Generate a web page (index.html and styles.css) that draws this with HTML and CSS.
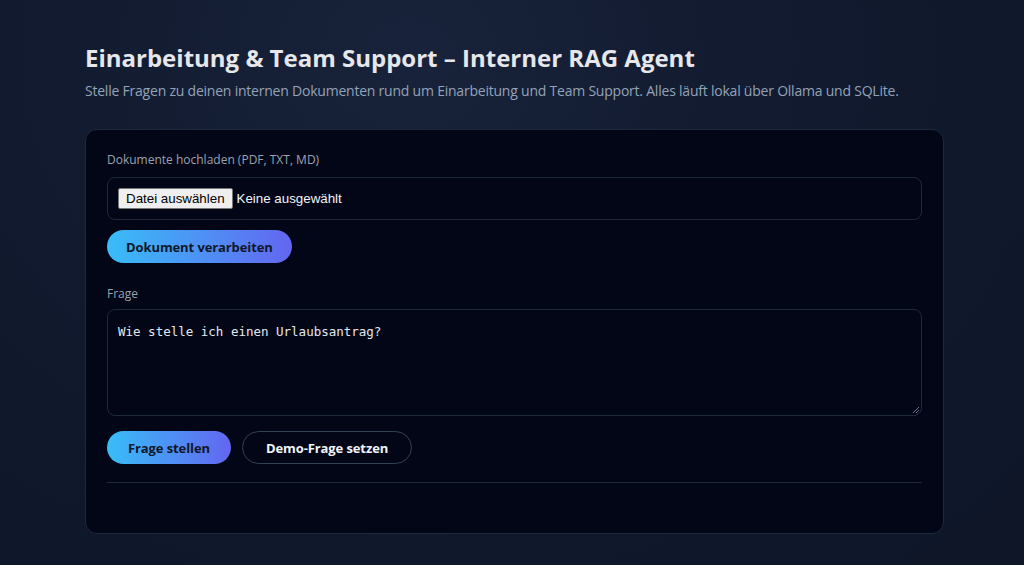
FILE: index.html
```html
<!DOCTYPE html>
<html lang="de">
<head>
<meta charset="utf-8">
<title>Einarbeitung &amp; Team Support – Interner RAG Agent</title>
<link rel="stylesheet" href="styles.css">
</head>
<body>
<main class="page">
  <header class="head">
    <h1 class="title">Einarbeitung &amp; Team Support – Interner RAG Agent</h1>
    <p class="subtitle">Stelle Fragen zu deinen internen Dokumenten rund um Einarbeitung und Team Support. Alles läuft lokal über Ollama und SQLite.</p>
  </header>
  <section class="card">
    <div class="label">Dokumente hochladen (PDF, TXT, MD)</div>
    <div class="file-box">
      <span class="file-btn">Datei auswählen</span>
      <span class="file-name">Keine ausgewählt</span>
    </div>
    <div class="row">
      <button class="btn primary">Dokument verarbeiten</button>
    </div>
    <div class="label label-q">Frage</div>
    <div class="textarea">Wie stelle ich einen Urlaubsantrag?<svg class="grip" width="8" height="8" viewBox="0 0 8 8"><path d="M7 1L1 7M7 4L4 7" stroke="#64748b" stroke-width="1"/></svg></div>
    <div class="row row-q">
      <button class="btn primary">Frage stellen</button>
      <button class="btn ghost">Demo-Frage setzen</button>
    </div>
    <div class="divider"></div>
  </section>
</main>
</body>
</html>
```
FILE: styles.css
```css
* { box-sizing: border-box; }
html, body { height: 100%; }
body {
  margin: 0;
  background: radial-gradient(ellipse at 40% 10%, #18223a 0%, #111a2e 45%, #0e1628 100%);
  color: #e5e7eb;
  font-family: "Open Sans", "Noto Sans", sans-serif;
}
.page {
  width: 859px;
  margin-left: 85px;
  padding-top: 42px;
}
.title {
  margin: 0;
  font-size: 24px;
  font-weight: 700;
  line-height: 32px;
  color: #e5e7eb;
  letter-spacing: 0;
}
.subtitle {
  margin: 7px 0 0;
  font-size: 14px;
  line-height: 20px;
  color: #94a3b8;
  letter-spacing: -0.22px;
}
.card {
  margin-top: 28px;
  background: #020617;
  border: 1px solid #1e293b;
  border-radius: 12px;
  padding: 21px 21px 50px;
}
.label {
  font-size: 12px;
  line-height: 18px;
  color: #9ca3af;
  margin-bottom: 8px;
}
.label-q { margin-top: 22px; margin-bottom: 6px; }
.file-box {
  height: 43px;
  border: 1px solid #1e293b;
  border-radius: 8px;
  display: flex;
  align-items: center;
  padding: 0 10px;
  font-family: "Liberation Sans", Arial, sans-serif;
  font-size: 13.33px;
}
.file-btn {
  background: #efefef;
  color: #000;
  border: 1px solid #767676;
  border-radius: 2px;
  padding: 1px 7px;
  line-height: 17px;
  margin-right: 4px;
}
.file-name { color: #f1f5f9; }
.row {
  display: flex;
  gap: 11px;
  margin-top: 10px;
}
.row-q { margin-top: 15px; }
.btn {
  height: 33px;
  border-radius: 999px;
  font-family: "Open Sans", "Noto Sans", sans-serif;
  font-size: 13px;
  font-weight: 700;
  padding: 0 19px;
  cursor: pointer;
  letter-spacing: -0.1px;
}
.primary {
  border: none;
  background: linear-gradient(90deg, #38bdf8 0%, #6366f1 100%);
  color: #0f172a;
}
.row-q .primary { padding: 0 21px; }
.ghost {
  background: transparent;
  border: 1px solid #334155;
  color: #f1f5f9;
  padding: 0 23px;
}
.textarea {
  position: relative;
  height: 107px;
  border: 1px solid #1e293b;
  border-radius: 8px;
  padding: 13px 10px;
  font-family: "DejaVu Sans Mono", "Liberation Mono", monospace;
  font-size: 12.5px;
  line-height: 18px;
  color: #e2e8f0;
  margin-bottom: 0;
}
.grip { position: absolute; right: 1px; bottom: 1px; }
.divider {
  margin-top: 18px;
  height: 1px;
  background: #1e293b;
}
```
